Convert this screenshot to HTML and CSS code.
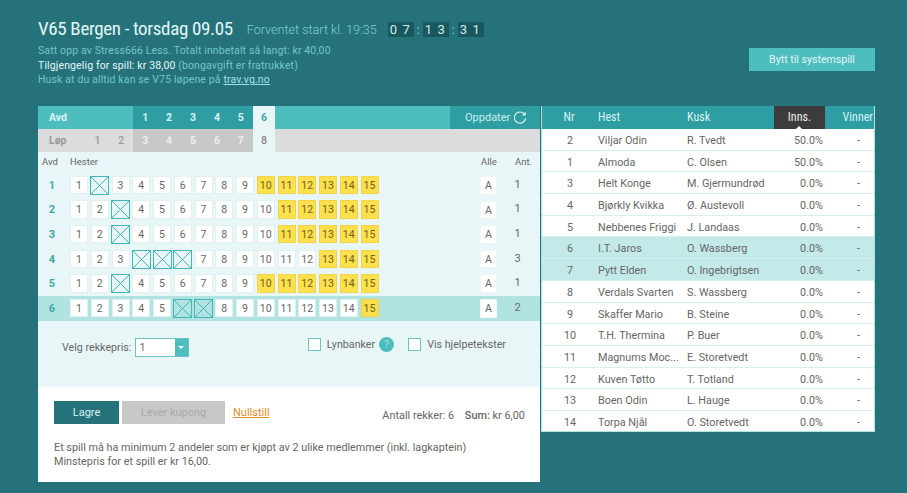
FILE: index.html
```html
<!DOCTYPE html>
<html lang="en">
<head>
  <meta charset="UTF-8" />
  <title>V65 Bergen</title>
  <link rel="stylesheet" href="styles.css">
</head>
<body>

  <!-- Heading -->
  <div class="top">
    <div class="top-text">
      <div class="title-line">
        <h1>V65 Bergen - torsdag 09.05</h1>
        <span class="start">Forventet start kl. 19:35</span>
        <div class="clock">
          <span class="digits">07</span><span class="colon">:</span>
          <span class="digits">13</span><span class="colon">:</span>
          <span class="digits">31</span>
        </div>
      </div>
      <p>Satt opp av Stress666 Less. Totalt innbetalt så langt: kr 40,00</p>
      <p><span class="light">Tilgjengelig for spill: kr 38,00</span> (bongavgift er fratrukket)</p>
      <p>Husk at du alltid kan se V75 løpene på <a href="#">trav.vg.no</a></p>
    </div>
    <button class="switch">Bytt til systemspill</button>
  </div>

  <div class="main">

    <!-- Coupon -->
    <div class="coupon">
      <div class="tabs avd-tabs">
        <span class="tab-label">Avd</span>
        <span class="tab spacer"></span>
        <span class="tab on">1</span><span class="tab on">2</span><span class="tab on">3</span><span class="tab on">4</span><span class="tab on">5</span><span class="tab active">6</span>
        <span class="refresh">Oppdater
          <svg width="14" height="14" viewBox="0 0 14 14"><path d="M11.6 3.4A5.6 5.6 0 1 0 12.6 7" fill="none" stroke="#e4f7f7" stroke-width="1.1"/><path d="M12.6 0.8V4.4H9Z" fill="#e4f7f7"/></svg>
        </span>
      </div>
      <div class="tabs lop-tabs">
        <span class="tab-label">Løp</span>
        <span class="tab plain">1</span><span class="tab plain">2</span>
        <span class="tab on">3</span><span class="tab on">4</span><span class="tab on">5</span><span class="tab on">6</span><span class="tab on">7</span><span class="tab active">8</span>
      </div>

      <div class="grid-area">
        <div class="grid-head">
          <span class="col-avd">Avd</span>
          <span class="col-hester">Hester</span>
          <span class="col-alle">Alle</span>
          <span class="col-ant">Ant.</span>
        </div>

        <div class="race">
          <span class="race-nr">1</span>
          <div class="cells">
            <span class="cell">1</span><span class="cell sel"></span><span class="cell">3</span><span class="cell">4</span><span class="cell">5</span><span class="cell">6</span><span class="cell">7</span><span class="cell">8</span><span class="cell">9</span><span class="cell yel">10</span><span class="cell yel">11</span><span class="cell yel">12</span><span class="cell yel">13</span><span class="cell yel">14</span><span class="cell yel">15</span>
          </div>
          <span class="cell all">A</span><span class="ant">1</span>
        </div>
        <div class="race">
          <span class="race-nr">2</span>
          <div class="cells">
            <span class="cell">1</span><span class="cell">2</span><span class="cell sel"></span><span class="cell">4</span><span class="cell">5</span><span class="cell">6</span><span class="cell">7</span><span class="cell">8</span><span class="cell">9</span><span class="cell">10</span><span class="cell yel">11</span><span class="cell yel">12</span><span class="cell yel">13</span><span class="cell yel">14</span><span class="cell yel">15</span>
          </div>
          <span class="cell all">A</span><span class="ant">1</span>
        </div>
        <div class="race">
          <span class="race-nr">3</span>
          <div class="cells">
            <span class="cell">1</span><span class="cell">2</span><span class="cell sel"></span><span class="cell">4</span><span class="cell">5</span><span class="cell">6</span><span class="cell">7</span><span class="cell">8</span><span class="cell">9</span><span class="cell">10</span><span class="cell yel">11</span><span class="cell yel">12</span><span class="cell yel">13</span><span class="cell yel">14</span><span class="cell yel">15</span>
          </div>
          <span class="cell all">A</span><span class="ant">1</span>
        </div>
        <div class="race">
          <span class="race-nr">4</span>
          <div class="cells">
            <span class="cell">1</span><span class="cell">2</span><span class="cell">3</span><span class="cell sel"></span><span class="cell sel"></span><span class="cell sel"></span><span class="cell">7</span><span class="cell">8</span><span class="cell">9</span><span class="cell">10</span><span class="cell">11</span><span class="cell">12</span><span class="cell yel">13</span><span class="cell yel">14</span><span class="cell yel">15</span>
          </div>
          <span class="cell all">A</span><span class="ant">3</span>
        </div>
        <div class="race">
          <span class="race-nr">5</span>
          <div class="cells">
            <span class="cell">1</span><span class="cell">2</span><span class="cell sel"></span><span class="cell">4</span><span class="cell">5</span><span class="cell">6</span><span class="cell">7</span><span class="cell">8</span><span class="cell">9</span><span class="cell yel">10</span><span class="cell yel">11</span><span class="cell yel">12</span><span class="cell yel">13</span><span class="cell yel">14</span><span class="cell yel">15</span>
          </div>
          <span class="cell all">A</span><span class="ant">1</span>
        </div>
        <div class="race current">
          <span class="race-nr">6</span>
          <div class="cells">
            <span class="cell">1</span><span class="cell">2</span><span class="cell">3</span><span class="cell">4</span><span class="cell">5</span><span class="cell sel"></span><span class="cell sel"></span><span class="cell">8</span><span class="cell">9</span><span class="cell">10</span><span class="cell">11</span><span class="cell">12</span><span class="cell">13</span><span class="cell">14</span><span class="cell yel">15</span>
          </div>
          <span class="cell all">A</span><span class="ant">2</span>
        </div>

        <div class="options">
          <div class="price">
            <span>Velg rekkepris:</span>
            <div class="select"><span class="select-val">1</span><span class="select-btn"></span></div>
          </div>
          <div class="checks">
            <span class="box"></span><span>Lynbanker</span><span class="help">?</span>
            <span class="box box-second"></span><span>Vis hjelpetekster</span>
          </div>
        </div>
      </div>

      <div class="actions">
        <div class="action-row">
          <button class="save">Lagre</button>
          <button class="deliver">Lever kupong</button>
          <a href="#" class="reset">Nullstill</a>
          <div class="sum">Antall rekker: 6 <b>Sum:</b> kr 6,00</div>
        </div>
        <p>Et spill må ha minimum 2 andeler som er kjøpt av 2 ulike medlemmer (inkl. lagkaptein)<br>Minstepris for et spill er kr 16,00.</p>
      </div>
    </div>

    <!-- Horses -->
    <div class="horses">
      <div class="horse head"><span class="nr">Nr</span><span class="name">Hest</span><span class="driver">Kusk</span><span class="pct">Inns.</span><span class="win">Vinner</span></div>
      <div class="horse"><span class="nr">2</span><span class="name">Viljar Odin</span><span class="driver">R. Tvedt</span><span class="pct">50.0%</span><span class="win">-</span></div>
      <div class="horse"><span class="nr">1</span><span class="name">Almoda</span><span class="driver">C. Olsen</span><span class="pct">50.0%</span><span class="win">-</span></div>
      <div class="horse"><span class="nr">3</span><span class="name">Helt Konge</span><span class="driver">M. Gjermundrød</span><span class="pct">0.0%</span><span class="win">-</span></div>
      <div class="horse"><span class="nr">4</span><span class="name">Bjørkly Kvikka</span><span class="driver">Ø. Austevoll</span><span class="pct">0.0%</span><span class="win">-</span></div>
      <div class="horse"><span class="nr">5</span><span class="name">Nebbenes Friggi</span><span class="driver">J. Landaas</span><span class="pct">0.0%</span><span class="win">-</span></div>
      <div class="horse picked"><span class="nr">6</span><span class="name">I.T. Jaros</span><span class="driver">O. Wassberg</span><span class="pct">0.0%</span><span class="win">-</span></div>
      <div class="horse picked"><span class="nr">7</span><span class="name">Pytt Elden</span><span class="driver">O. Ingebrigtsen</span><span class="pct">0.0%</span><span class="win">-</span></div>
      <div class="horse"><span class="nr">8</span><span class="name">Verdals Svarten</span><span class="driver">S. Wassberg</span><span class="pct">0.0%</span><span class="win">-</span></div>
      <div class="horse"><span class="nr">9</span><span class="name">Skaffer Mario</span><span class="driver">B. Steine</span><span class="pct">0.0%</span><span class="win">-</span></div>
      <div class="horse"><span class="nr">10</span><span class="name">T.H. Thermina</span><span class="driver">P. Buer</span><span class="pct">0.0%</span><span class="win">-</span></div>
      <div class="horse"><span class="nr">11</span><span class="name">Magnums Moc...</span><span class="driver">E. Storetvedt</span><span class="pct">0.0%</span><span class="win">-</span></div>
      <div class="horse"><span class="nr">12</span><span class="name">Kuven Tøtto</span><span class="driver">T. Totland</span><span class="pct">0.0%</span><span class="win">-</span></div>
      <div class="horse"><span class="nr">13</span><span class="name">Boen Odin</span><span class="driver">L. Hauge</span><span class="pct">0.0%</span><span class="win">-</span></div>
      <div class="horse"><span class="nr">14</span><span class="name">Torpa Njål</span><span class="driver">O. Storetvedt</span><span class="pct">0.0%</span><span class="win">-</span></div>
    </div>
  </div>

</body>
</html>
```

FILE: styles.css
```css
body {
  margin: 0;
  height: 493px;
  overflow: hidden;
  padding: 0 32px 0 38px;
  background-color: #25727b;
  font-family: Roboto, Arial, sans-serif;
  font-size: 11px;
  color: #666;
  box-sizing: border-box;
}
p {
  margin: 0;
}

/* heading */
.top {
  display: flex;
  justify-content: space-between;
  height: 106px;
  padding-top: 14px;
  box-sizing: border-box;
}
.title-line {
  display: flex;
  align-items: center;
  height: 28px;
  margin-bottom: 1px;
}
h1 {
  margin: 0;
  font-family: "Roboto Condensed", "Liberation Sans Narrow", Roboto, sans-serif;
  font-stretch: 75%;
  font-size: 19px;
  letter-spacing: -0.35px;
  font-weight: 400;
  color: #e4f7f7;
}
.start {
  margin: 2px 0 0 14px;
  font-size: 12.6px;
  font-weight: 300;
  color: #7fd0d0;
}
.clock {
  display: flex;
  align-items: center;
  margin: 2px 0 0 11px;
  color: #cdeeee;
  font-size: 13px;
}
.digits {
  width: 26px;
  height: 15px;
  line-height: 15px;
  padding-left: 2px;
  box-sizing: border-box;
  text-align: left;
  letter-spacing: 5.5px;
  background-color: #1a5860;
}
.colon {
  width: 9px;
  text-align: center;
  color: #7fd0d0;
}
.top-text p {
  position: relative;
  top: 1px;
  line-height: 14.6px;
  font-size: 10.5px;
  letter-spacing: 0.13px;
  color: #6fc8c8;
}
.top-text .light {
  color: #e4f7f7;
}
.top-text a {
  color: #a5e0e0;
}
.switch {
  width: 126px;
  height: 23px;
  margin-top: 34px;
  border: none;
  background-color: #4dbdbe;
  color: #e4f7f7;
  font-family: inherit;
  font-size: 10.6px;
}

.main {
  display: flex;
  align-items: flex-start;
}

/* coupon */
.coupon {
  width: 502px;
  flex: none;
}
.tabs {
  display: flex;
  height: 23px;
  line-height: 23px;
  font-weight: 700;
  font-size: 10.5px;
}
.avd-tabs {
  background-color: #4dbdbe;
  color: #d8f3f3;
}
.lop-tabs {
  background-color: #dcdcdc;
  color: #999;
}
.tab-label {
  width: 47.5px;
  padding-left: 11px;
  box-sizing: border-box;
}
.tab {
  width: 23.9px;
  text-align: center;
}
.tab.spacer {
  width: 47.8px;
}
.tab.plain {
  font-weight: 500;
}
.avd-tabs .tab.on {
  background-color: #2f9ea3;
}
.lop-tabs .tab.on {
  background-color: #c8c8c8;
  color: #eee;
}
.tab.active {
  background-color: #e9f6f7;
  color: #3fa8ab;
  width: 22.5px;
}
.lop-tabs .tab.active {
  color: #888;
  font-weight: 500;
}
.refresh {
  display: flex;
  align-items: center;
  gap: 3px;
  width: 90px;
  margin-left: auto;
  padding-left: 15px;
  box-sizing: border-box;
  background-color: #2f9ea3;
  color: #c8eeee;
  font-weight: 400;
  font-size: 11px;
}

.grid-area {
  background-color: #e9f6f7;
  height: 235px;
}
.grid-head {
  display: flex;
  height: 21px;
  line-height: 20px;
  font-size: 9.5px;
}
.col-avd {
  width: 27px;
  padding-left: 4px;
  box-sizing: border-box;
}
.col-hester {
  flex: 1;
  padding-left: 5px;
}
.col-alle {
  width: 34px;
}
.col-ant {
  width: 25px;
}
.race {
  display: flex;
  align-items: center;
  height: 24.6px;
}
.race.current {
  background-color: #b2e3e3;
}
.race-nr {
  width: 32px;
  padding-right: 4px;
  box-sizing: border-box;
  text-align: center;
  color: #3fa8ab;
  font-weight: 700;
}
.cells {
  display: flex;
  gap: 2.75px;
  width: 410px;
}
.cell {
  width: 18px;
  height: 18.5px;
  line-height: 17px;
  text-align: center;
  flex: none;
  box-sizing: border-box;
  background-color: #fff;
  border: 1px solid #e1f1f1;
  font-size: 10.5px;
  color: #666;
}
.cell.yel {
  background-color: #fde04c;
  border-color: #f2d34a;
  color: #6d5f20;
}
.cell.sel {
  width: 19px;
  height: 19px;
  margin: 0 -0.5px;
  background-color: transparent;
  border: 1.4px solid #43b7b7;
  background-image:
    linear-gradient(to top right, transparent calc(50% - 0.6px), #43b7b7 calc(50% - 0.6px), #43b7b7 calc(50% + 0.6px), transparent calc(50% + 0.6px)),
    linear-gradient(to bottom right, transparent calc(50% - 0.6px), #43b7b7 calc(50% - 0.6px), #43b7b7 calc(50% + 0.6px), transparent calc(50% + 0.6px));
}
.cell.all {
  width: 17px;
  border-color: #eef6f6;
}
.ant {
  position: relative;
  top: -1px;
  width: 40px;
  text-align: center;
  padding-left: 1px;
  box-sizing: border-box;
}

.options {
  display: flex;
  justify-content: space-between;
  padding: 17px 34px 0 24px;
  font-size: 10.7px;
}
.price {
  display: flex;
  align-items: flex-start;
  gap: 4px;
  line-height: 19px;
}
.select {
  display: flex;
  width: 54px;
  height: 19px;
  box-sizing: border-box;
  background-color: #fff;
  border: 1px solid #6cc3c4;
}
.select-val {
  flex: 1;
  padding-left: 3px;
  line-height: 18px;
}
.select-btn {
  width: 13px;
  position: relative;
  background-color: #4dbdbe;
}
.select-btn::after {
  content: "";
  position: absolute;
  left: 3px;
  top: 7px;
  border: 3.5px solid transparent;
  border-top-color: #fff;
}
.checks {
  display: flex;
  align-items: center;
  height: 13px;
}
.box {
  width: 13px;
  height: 13px;
  box-sizing: border-box;
  border: 1px solid #6cc3c4;
  background-color: #fff;
  margin-right: 6px;
}
.box-second {
  margin-left: 14px;
}
.help {
  width: 15px;
  height: 15px;
  margin-left: 4px;
  line-height: 15px;
  border-radius: 50%;
  text-align: center;
  background-color: #4dbdbe;
  color: #a8e2e2;
  font-size: 10px;
}

/* actions */
.actions {
  height: 95px;
  padding: 14px 15px 0 16px;
  box-sizing: border-box;
  background-color: #fff;
}
.action-row {
  display: flex;
  align-items: flex-start;
  margin-bottom: 14px;
}
.save, .deliver {
  height: 23px;
  border: none;
  font-family: inherit;
  font-size: 11px;
}
.save {
  width: 65px;
  background-color: #25727b;
  color: #d8f3f3;
}
.deliver {
  width: 103px;
  margin-left: 3px;
  background-color: #c8c8c8;
  color: #aaa;
}
.reset {
  margin-left: 8px;
  line-height: 23px;
  color: #e58a2b;
  font-size: 11px;
}
.sum {
  margin-left: auto;
  margin-top: 4px;
  line-height: 22px;
  font-size: 10.9px;
}
.sum b {
  margin-left: 8px;
  font-weight: 500;
}
.actions p {
  line-height: 14px;
  font-size: 10.8px;
}

/* horses */
.horses {
  width: 335px;
  height: 326px;
  margin-left: 1px;
  box-sizing: border-box;
  background-color: #fff;
  border: solid #b2e3e3;
  border-width: 0 1px 1px;
  overflow: hidden;
}
.horse {
  display: flex;
  height: 21.7px;
  line-height: 21px;
  padding-top: 1px;
  box-sizing: border-box;
  border-bottom: 1px solid #d9eeee;
  font-size: 10.8px;
}
.horse:last-child {
  border-bottom: none;
}
.horse.picked {
  background-color: #c3e9e9;
}
.horse.head {
  height: 23px;
  line-height: 23px;
  padding-top: 0;
  margin: 0 -1px;
  border-bottom: none;
  background-color: #2f9ea3;
  color: #d8f5f5;
  font-family: "Roboto Condensed", Roboto, sans-serif;
  font-size: 12px;
}
.nr {
  width: 56px;
  text-align: center;
  flex: none;
}
.name {
  width: 89px;
  flex: none;
}
.driver {
  width: 88px;
  flex: none;
}
.pct {
  width: 48px;
  flex: none;
  text-align: right;
}
.win {
  flex: 1;
  text-align: center;
  padding-left: 20px;
}
.head .pct {
  width: 51px;
  position: relative;
  text-align: center;
  background-color: #3c3c3c;
  color: #eee;
}
.head .pct::after {
  content: "";
  position: absolute;
  left: 22px;
  bottom: 0;
  border: 3px solid transparent;
  border-bottom-color: #fff;
}
.head .name {
  padding-left: 1px;
  box-sizing: border-box;
}
.head .driver {
  padding-left: 1px;
  box-sizing: border-box;
}
.head .win {
  padding-left: 0;
  text-align: right;
  padding-right: 2px;
}
```
